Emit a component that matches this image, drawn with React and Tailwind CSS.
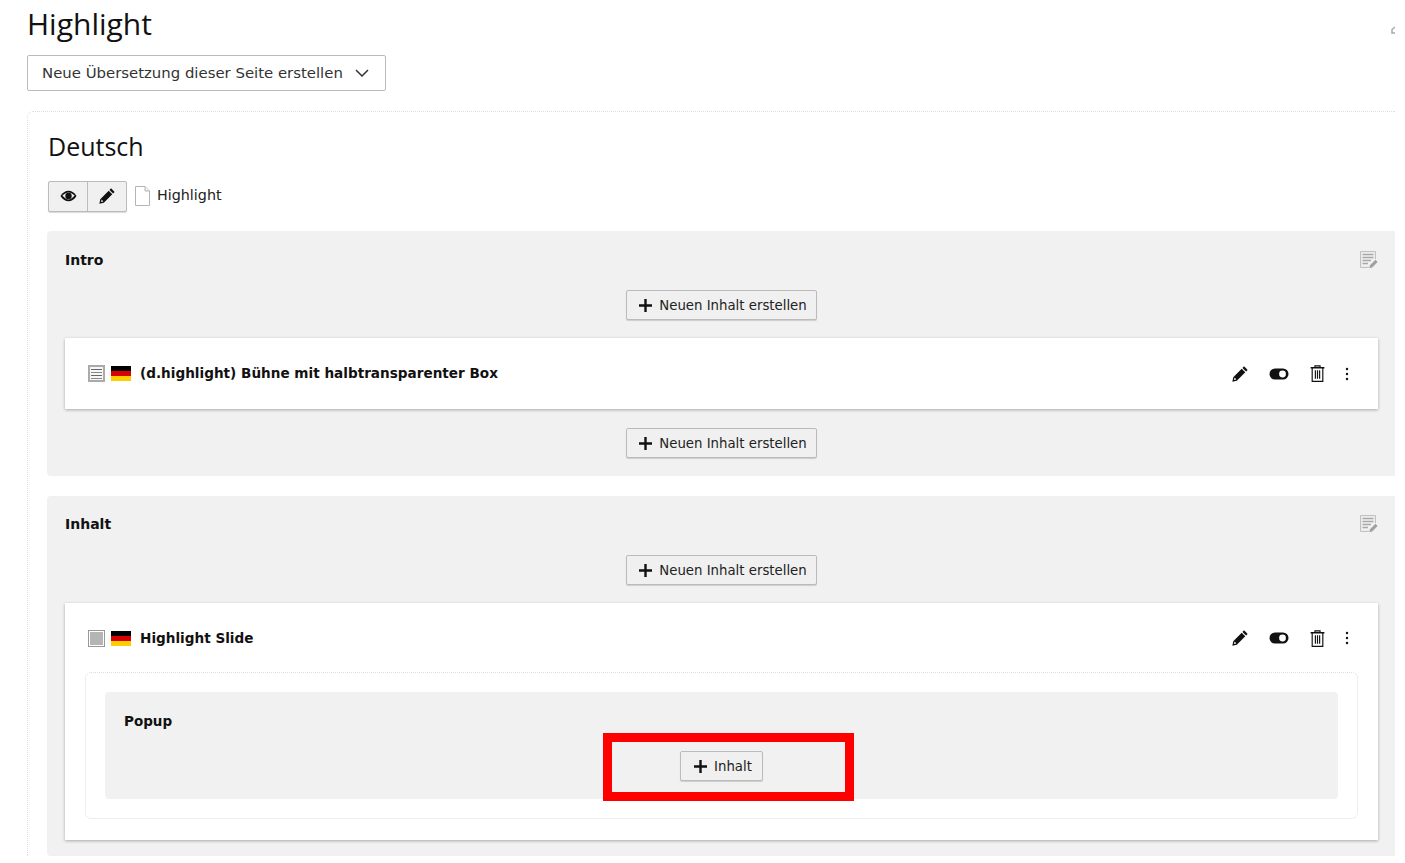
const verdana = "font-['DejaVu_Sans',sans-serif]"

function PencilIcon({ className = 'w-[18px] h-[18px]' }) {
  return (
    <svg viewBox="0 0 16 16" className={className}>
      <path d="M11.6 1.2 14.8 4.4 13.4 5.8 10.2 2.6Z" fill="#111" />
      <path d="M9.5 3.3 12.7 6.5 5.2 14 1.2 14.8 2 10.8ZM3.2 11.2 2.7 13.3 4.8 12.8Z" fill="#111" fillRule="evenodd" />
    </svg>
  )
}

function EyeIcon() {
  return (
    <svg viewBox="0 0 18 12" className="w-[17px] h-[12px]">
      <path d="M0.5 6C3 2 6 0.5 9 0.5S15 2 17.5 6C15 10 12 11.5 9 11.5S3 10 0.5 6Z" fill="#111" />
      <path d="M2.5 5.6C5 3 7 2.2 9 2.2S13 3 15.5 5.6C13 8.6 11 9.8 9 9.8S5 8.6 2.5 5.6Z" fill="#eee" />
      <circle cx="9" cy="6" r="3.4" fill="#111" />
    </svg>
  )
}

function ToggleIcon() {
  return (
    <svg viewBox="0 0 20 12" className="w-[20px] h-[12px]">
      <rect x="0.5" y="0.5" width="19" height="11" rx="5.5" fill="#111" />
      <circle cx="13.5" cy="6" r="3.4" fill="#fff" />
    </svg>
  )
}

function TrashIcon() {
  return (
    <svg viewBox="0 0 14 16" className="w-[15px] h-[17px]" fill="none" stroke="#111" strokeWidth="1.1">
      <path d="M0.5 2.6H13.5" strokeWidth="1.4" />
      <path d="M4.6 2.4V0.8H9.4V2.4" />
      <path d="M2 2.6V15.4H12V2.6" />
      <path d="M5 5V13M7 5V13M9 5V13" />
    </svg>
  )
}

function DotsIcon() {
  return (
    <svg viewBox="0 0 4 14" className="w-[4px] h-[14px]" fill="#111">
      <circle cx="2" cy="2" r="1.2" />
      <circle cx="2" cy="7" r="1.2" />
      <circle cx="2" cy="12" r="1.2" />
    </svg>
  )
}

function DocIcon() {
  return (
    <svg viewBox="0 0 15 20" className="w-[15px] h-[20px]">
      <path d="M0.5 0.5H10L14.5 5V19.5H0.5Z" fill="#fff" stroke="#b5b5b5" />
      <path d="M10 0.5V5H14.5" fill="#eee" stroke="#b5b5b5" />
    </svg>
  )
}

function ColumnIcon() {
  return (
    <svg viewBox="0 0 18 18" className="w-[18px] h-[18px]" fill="none">
      <path d="M0.6 0.6H15.4V8M0.6 0.6V16.4H9" stroke="#bbb" strokeWidth="1" />
      <path d="M2.5 3.5H13.5M2.5 6.5H13.5M2.5 9.5H11M2.5 12.5H8" stroke="#a8a8a8" strokeWidth="1.5" />
      <path d="M15.4 8.8 17.6 11 12.2 16.4 9.4 17.2 10 14.2Z" fill="#a0a0a0" />
    </svg>
  )
}

function Flag() {
  return (
    <div className="flex flex-col w-[20px] h-[15px]">
      <div className="flex-1 bg-black" />
      <div className="flex-1 bg-[#d80000]" />
      <div className="flex-1 bg-[#ffce00]" />
    </div>
  )
}

function PlusIcon() {
  return (
    <svg viewBox="0 0 13 13" className="w-[13px] h-[13px]" stroke="#111" strokeWidth="2.4">
      <path d="M0 6.5H13M6.5 0V13" />
    </svg>
  )
}

function AddButton({ label }) {
  return (
    <div className="flex justify-center">
      <button className={`${verdana} flex items-center justify-center min-w-[83px] h-[30px] pl-[12px] pr-[9px] gap-[7px] bg-[#f0f0f0] border border-[#bbb] rounded-[2px] shadow-[0_1px_1px_rgba(0,0,0,0.15)] text-[13.3px] text-[#222]`}>
        <PlusIcon />
        <span className="pt-[1px]">{label}</span>
      </button>
    </div>
  )
}

function ElementHeader({ icon, title, className }) {
  return (
    <div className={`flex items-center ${className}`}>
      <div className="ml-[23px] mr-[6px]">{icon}</div>
      <Flag />
      <span className={`${verdana} ml-[9px] font-bold text-[13.6px] text-[#111]`}>{title}</span>
      <div className="ml-auto mr-[29px] flex items-center">
        <PencilIcon />
        <div className="ml-[20px]"><ToggleIcon /></div>
        <div className="ml-[21px]"><TrashIcon /></div>
        <div className="ml-[20px]"><DotsIcon /></div>
      </div>
    </div>
  )
}

const textIcon = (
  <div className="w-[17px] h-[17px] bg-[#f6f6f6] border-2 border-[#aaa] flex flex-col justify-center gap-[2px] px-[1px]">
    <div className="h-[1px] bg-[#666]" />
    <div className="h-[1px] bg-[#888]" />
    <div className="h-[1px] bg-[#666]" />
    <div className="h-[1px] bg-[#888]" />
  </div>
)

const greyIcon = (
  <div className="w-[17px] h-[17px] bg-white border border-[#999] p-[1px]">
    <div className="w-full h-full bg-[#b5b5b5]" />
  </div>
)

function ColumnTitle({ label }) {
  return (
    <div className="flex items-center justify-between h-[22px]">
      <span className={`${verdana} font-bold text-[14px] text-[#111]`}>{label}</span>
      <ColumnIcon />
    </div>
  )
}

export default function App() {
  return (
    <div className="w-[1405px] h-[856px] overflow-hidden bg-white pl-[27px] pr-[10px] font-['Open_Sans',sans-serif]">
      <div className="flex items-center justify-between h-[55px] pb-[8px]">
        <h1 className="text-[30px] leading-[40px] text-[#111]">Highlight</h1>
        <svg viewBox="0 0 4 8" className="w-[4px] h-[8px] mt-[12px]" fill="none" stroke="#aaa" strokeWidth="1.5">
          <path d="M4 1 1 3.5V7H4" />
        </svg>
      </div>

      <button className={`${verdana} flex items-center justify-between w-[359px] h-[36px] pl-[14px] pr-[16px] bg-white border border-[#bbb] rounded-[2px] text-[14.9px] text-[#333]`}>
        <span>Neue Übersetzung dieser Seite erstellen</span>
        <svg viewBox="0 0 14 8" className="w-[14px] h-[8px]" fill="none" stroke="#333" strokeWidth="1.5">
          <path d="M1 1 7 7 13 1" />
        </svg>
      </button>

      <div className="mt-[20px] pl-[19px] pt-[16px] border-l border-t border-dotted border-[#ddd] rounded-tl-[6px]">
        <h2 className="text-[25px] leading-[36px] text-[#111] ml-[1px]">Deutsch</h2>

        <div className="flex items-center mt-[17px] h-[31px]">
          <div className="ml-[1px] flex h-[31px] border border-[#bbb] rounded-[2px] bg-[#f0f0f0] shadow-[0_1px_1px_rgba(0,0,0,0.15)]">
            <div className="w-[39px] flex items-center justify-center border-r border-[#bbb] pb-[2px]"><EyeIcon /></div>
            <div className="w-[38px] flex items-center justify-center pb-[2px]"><PencilIcon /></div>
          </div>
          <div className="ml-[8px] pb-[2px]"><DocIcon /></div>
          <span className={`${verdana} ml-[7px] pb-[2px] text-[14.3px] text-[#222]`}>Highlight</span>
        </div>

        <section className="mt-[19px] bg-[#f1f1f1] rounded-l-[4px] pl-[18px] pr-[17px] pt-[18px] pb-[18px]">
          <ColumnTitle label="Intro" />
          <div className="mt-[19px]"><AddButton label="Neuen Inhalt erstellen" /></div>
          <div className="mt-[18px] bg-white shadow-[0_1px_3px_rgba(0,0,0,0.3)]">
            <ElementHeader icon={textIcon} title="(d.highlight) Bühne mit halbtransparenter Box" className="h-[71px]" />
          </div>
          <div className="mt-[19px]"><AddButton label="Neuen Inhalt erstellen" /></div>
        </section>

        <section className="mt-[20px] bg-[#f1f1f1] rounded-l-[4px] pl-[18px] pr-[17px] pt-[17px] pb-[16px]">
          <ColumnTitle label="Inhalt" />
          <div className="mt-[20px]"><AddButton label="Neuen Inhalt erstellen" /></div>
          <div className="mt-[18px] bg-white shadow-[0_1px_3px_rgba(0,0,0,0.3)] pb-[21px]">
            <ElementHeader icon={greyIcon} title="Highlight Slide" className="h-[70px] -mb-[1px]" />
            <div className="mx-[20px] px-[19px] py-[19px] border border-dotted border-[#ddd] rounded-[6px]">
              <div className="relative h-[107px] bg-[#f1f1f1] rounded-[4px] px-[19px] pt-[18px]">
                <div className={`${verdana} font-bold text-[13.5px] leading-[22px] text-[#111]`}>Popup</div>
                <div className="mt-[19px]"><AddButton label="Inhalt" /></div>
                <div className="absolute left-[498px] top-[41px] w-[251px] h-[68px] border-[9px] border-[#ff0000]" />
              </div>
            </div>
          </div>
        </section>
      </div>
    </div>
  )
}
